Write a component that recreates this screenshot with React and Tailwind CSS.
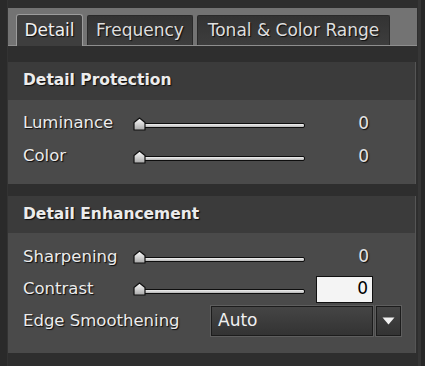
import React from "react";

const shadow = "[text-shadow:1px_1px_1px_#0c0c0c]";

function Thumb() {
  return (
    <svg width="13" height="14" viewBox="0 0 13 14" className="absolute left-0 top-0">
      <defs>
        <linearGradient id="tg" x1="0" y1="0" x2="0" y2="1">
          <stop offset="0" stopColor="#ffffff" />
          <stop offset="1" stopColor="#a8a8a8" />
        </linearGradient>
      </defs>
      <path d="M1 13 L1 5.5 L6.5 1 L12 5.5 L12 13 Z" fill="url(#tg)" stroke="#111" strokeWidth="1.2" strokeLinejoin="round" />
    </svg>
  );
}

function Slider() {
  return (
    <div className="relative flex items-center w-[172px] h-[14px]">
      <div className="ml-[8px] flex-1 h-[5px] mt-[4px] rounded-[2px] border border-[#0e0e0e] bg-gradient-to-b from-[#f2f2f2] to-[#b5b5b5]" />
      <Thumb />
    </div>
  );
}

function SliderRow({ label, h, boxed }) {
  return (
    <div className={`flex items-center pl-[15px] ${h}`}>
      <div className={`w-[110px] text-[16.5px] text-[#ececec] ${shadow}`}>{label}</div>
      <Slider />
      {boxed ? (
        <div className="ml-[11px] w-[57px] h-[27px] bg-[#f4f4f4] border border-[#111] flex items-center justify-end pr-[4px] text-[17px] text-black">
          0
        </div>
      ) : (
        <div className={`w-[66px] text-right pr-[2px] text-[17px] text-[#e4e4e4] ${shadow}`}>0</div>
      )}
    </div>
  );
}

function Tab({ label, active, w }) {
  if (active) {
    return (
      <div className={`${w} h-[32px] -mb-[1px] rounded-t-[3px] border border-b-0 border-[#9c9c9c] bg-[#3e3e3e] flex items-center justify-center text-[17px] text-[#f0f0f0] ${shadow}`}>
        {label}
      </div>
    );
  }
  return (
    <div className={`${w} h-[30px] rounded-t-[2px] border border-b-0 border-[#2a2a2a] bg-gradient-to-b from-[#333333] to-[#3d3d3d] flex items-center justify-center text-[17px] text-[#dedede] ${shadow}`}>
      {label}
    </div>
  );
}

function Section({ title, headerH, children }) {
  return (
    <div className="w-[408px] border-r border-[#555]">
      <div className={`${headerH} bg-[#3b3b3b] flex items-center pl-[15px] text-[15.5px] font-bold text-[#ececec] ${shadow}`}>
        {title}
      </div>
      <div className="bg-[#4a4a4a]">{children}</div>
    </div>
  );
}

export default function App() {
  return (
    <div className="w-[425px] h-[366px] overflow-hidden bg-[#2e2e2e] flex" style={{ fontFamily: '"DejaVu Sans", sans-serif' }}>
      <div className="w-[8px] bg-[#2a2a2a] border-r border-[#333]" />
      <div className="w-[410px] pt-[8px] flex flex-col">
        <div className="w-[409px] h-[38px] bg-[#737373] border-b border-[#8e8e8e] flex items-end gap-[4px] pl-[8px]">
          <Tab label="Detail" active w="w-[67px]" />
          <Tab label="Frequency" w="w-[106px]" />
          <Tab label="Tonal & Color Range" w="w-[193px]" />
        </div>
        <div className="mt-[16px]">
          <Section title="Detail Protection" headerH="h-[38px]">
            <div className="pt-[7px] pb-[11px]">
              <SliderRow label="Luminance" h="h-[33px]" />
              <SliderRow label="Color" h="h-[33px]" />
            </div>
          </Section>
        </div>
        <div className="mt-[12px]">
          <Section title="Detail Enhancement" headerH="h-[37px]">
            <div className="pt-[8px] pb-[16px]">
              <SliderRow label="Sharpening" h="h-[32px]" />
              <SliderRow label="Contrast" h="h-[32px]" boxed />
              <div className="flex items-center pl-[15px] h-[32px]">
                <div className={`w-[188px] text-[16.5px] text-[#ececec] ${shadow}`}>Edge Smoothening</div>
                <div className="w-[162px] h-[30px] border border-[#1c1c1c] [box-shadow:0_0_0_1px_#5e5e5e] bg-gradient-to-b from-[#454545] to-[#333333] flex items-center pl-[6px] text-[17px] text-[#f0f0f0]">
                  Auto
                </div>
                <div className="ml-[3px] w-[25px] h-[30px] border border-[#1c1c1c] [box-shadow:0_0_0_1px_#5e5e5e] bg-gradient-to-b from-[#454545] to-[#333333] flex items-center justify-center">
                  <svg width="13" height="8" viewBox="0 0 13 8">
                    <path d="M0.5 0.5 L12.5 0.5 L6.5 7.5 Z" fill="#f2f2f2" />
                  </svg>
                </div>
              </div>
            </div>
          </Section>
        </div>
      </div>
      <div className="w-[7px] bg-[#272727] border-l-[3px] border-[#363636]" />
    </div>
  );
}
